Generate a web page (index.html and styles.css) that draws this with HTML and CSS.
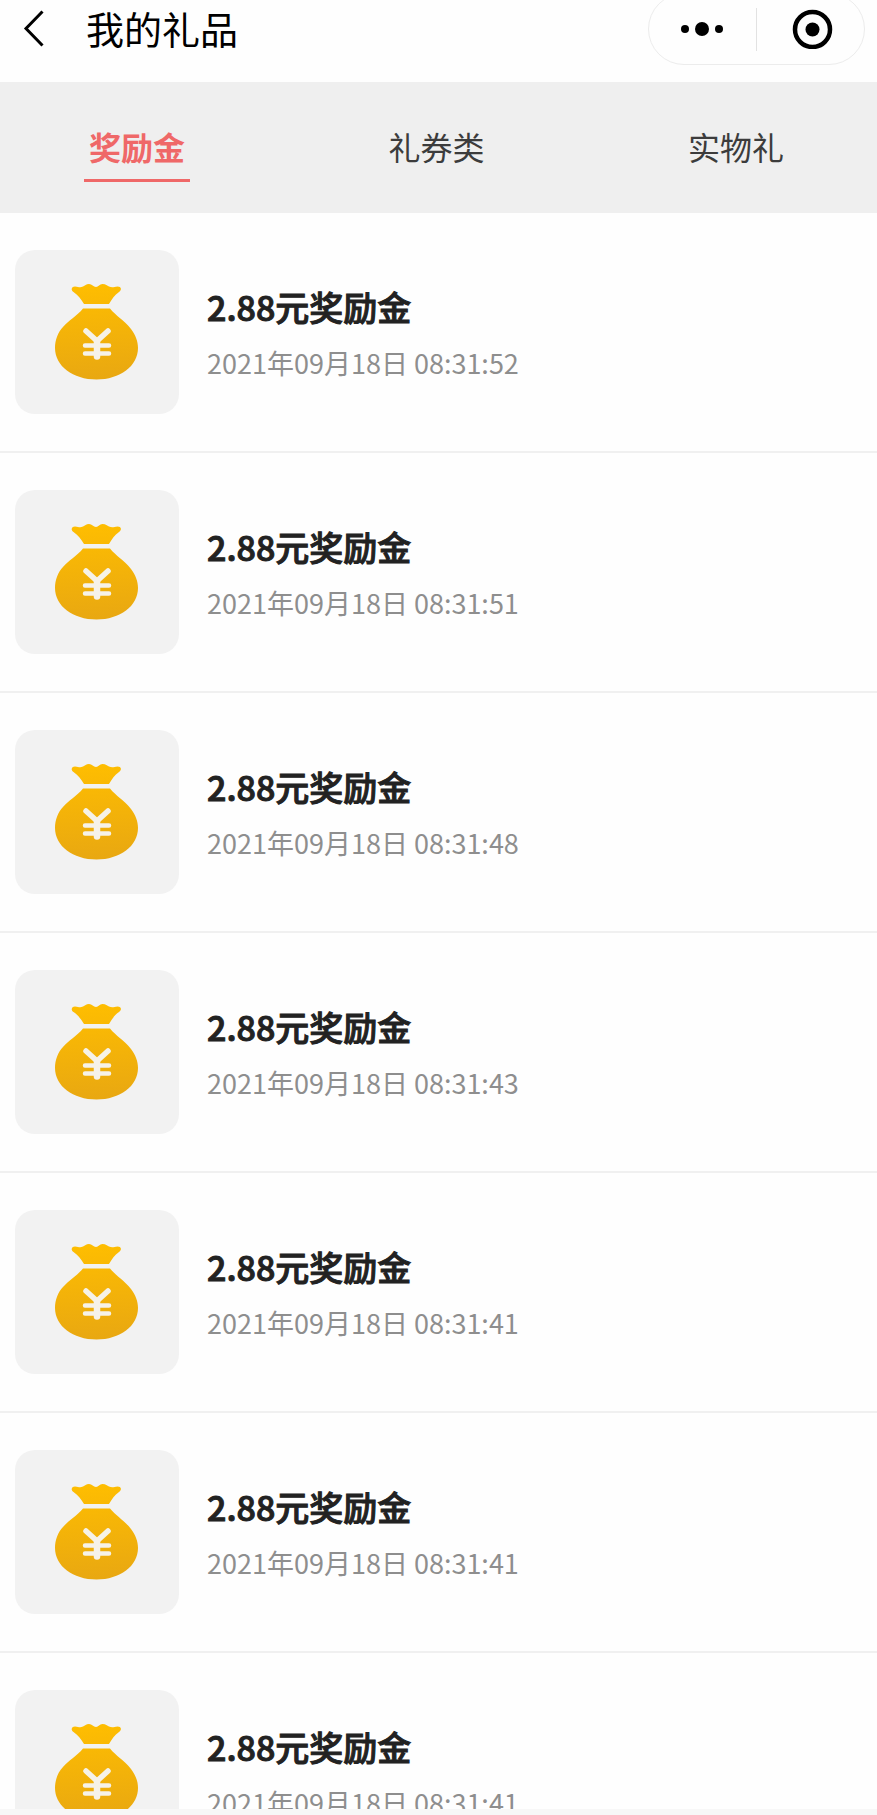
FILE: index.html
```html
<!DOCTYPE html>
<html lang="zh-CN">
<head>
<meta charset="utf-8">
<meta name="viewport" content="width=device-width, initial-scale=1">
<title>我的礼品</title>
<link rel="stylesheet" href="styles.css">
</head>
<body>
<svg class="defs" width="0" height="0" aria-hidden="true">
  <defs>
    <linearGradient id="gold" gradientUnits="userSpaceOnUse" x1="40" y1="34" x2="46" y2="130">
      <stop offset="0" stop-color="#ffbe00"/>
      <stop offset="1" stop-color="#e9a811"/>
    </linearGradient>
    <symbol id="bag" viewBox="0 0 164 164">
      <path fill="url(#gold)" d="M69 54 C66 49 63 45 58.500 42 C55.500 40 56.500 36.500 60 36.500 C64 37 65 38 68 36.500 C70 35.500 71 34 74 34 C77 34 78.500 37 81 37 C83.500 37 84.500 34 87.500 34 C91 34 92 35.500 94 36.500 C97 38 99 37 102.500 36.500 C106.500 36.500 107 40 104 42 C99.500 45 97 49 94 54 Z"/>
      <path fill="url(#gold)" d="M68 58.500 H95 C101 66 109 70 116 79 C120.500 85 123 91 123 98 C123 116 105 129.500 81.500 129.500 C58 129.500 40 116 40 98 C40 90 43 82 48 77 C54 70 62 66 68 58.500 Z"/>
      <path fill="none" stroke="#f6f2e8" stroke-linecap="round" stroke-width="4.500" d="M70 95.500 H94 M70 103.500 H94"/>
      <path fill="none" stroke="#f6f2e8" stroke-linecap="round" stroke-linejoin="round" stroke-width="5.500" d="M71 81 L82 91 L93 81"/>
      <path fill="none" stroke="#f6f2e8" stroke-linecap="round" stroke-width="6.500" d="M82 91 V106.500"/>
    </symbol>
  </defs>
</svg>
<div class="app">
  <header class="header">
    <div class="navbar">
      <button class="back" type="button" aria-label="返回">
        <svg width="24" height="40" viewBox="0 0 24 40"><path d="M21.500 2.500 L5 19.500 L21.500 36.500" fill="none" stroke="#000" stroke-width="3"/></svg>
      </button>
      <h1 class="title">我的礼品</h1>
      <div class="capsule">
        <button class="capsule-button" type="button" aria-label="更多">
          <svg width="44" height="16" viewBox="0 0 44 16"><circle cx="4" cy="8" r="4"/><circle cx="21" cy="8" r="7"/><circle cx="38" cy="8" r="4"/></svg>
        </button>
        <span class="divider"></span>
        <button class="capsule-button" type="button" aria-label="关闭">
          <svg width="44" height="40" viewBox="0 0 44 40"><circle cx="23.500" cy="20.500" r="17.500" fill="none" stroke="#000" stroke-width="4.500"/><circle cx="23.500" cy="20.500" r="7"/></svg>
        </button>
      </div>
    </div>
  </header>
  <nav class="tabs" aria-label="礼品分类">
    <button class="tab active" type="button">奖励金</button>
    <button class="tab" type="button">礼券类</button>
    <button class="tab" type="button">实物礼</button>
  </nav>
  <main class="content">
    <ul class="list">
      <li class="item"><span class="tile"><svg class="bag"><use href="#bag"/></svg></span><div class="info"><h2 class="name">2.88元奖励金</h2><time class="date">2021年09月18日 08:31:52</time></div></li>
      <li class="item"><span class="tile"><svg class="bag"><use href="#bag"/></svg></span><div class="info"><h2 class="name">2.88元奖励金</h2><time class="date">2021年09月18日 08:31:51</time></div></li>
      <li class="item"><span class="tile"><svg class="bag"><use href="#bag"/></svg></span><div class="info"><h2 class="name">2.88元奖励金</h2><time class="date">2021年09月18日 08:31:48</time></div></li>
      <li class="item"><span class="tile"><svg class="bag"><use href="#bag"/></svg></span><div class="info"><h2 class="name">2.88元奖励金</h2><time class="date">2021年09月18日 08:31:43</time></div></li>
      <li class="item"><span class="tile"><svg class="bag"><use href="#bag"/></svg></span><div class="info"><h2 class="name">2.88元奖励金</h2><time class="date">2021年09月18日 08:31:41</time></div></li>
      <li class="item"><span class="tile"><svg class="bag"><use href="#bag"/></svg></span><div class="info"><h2 class="name">2.88元奖励金</h2><time class="date">2021年09月18日 08:31:41</time></div></li>
      <li class="item"><span class="tile"><svg class="bag"><use href="#bag"/></svg></span><div class="info"><h2 class="name">2.88元奖励金</h2><time class="date">2021年09月18日 08:31:41</time></div></li>
    </ul>
  </main>
</div>
</body>
</html>
```
FILE: styles.css
```css
* {
  box-sizing: border-box;
}

body {
  margin: 0;
  background: #f7f7f7;
  font-family: "Noto Sans CJK SC", sans-serif;
}

button {
  padding: 0;
  border: 0;
  background: none;
  font: inherit;
  cursor: pointer;
}

svg {
  display: block;
}

.defs {
  position: absolute;
}

.app {
  display: flex;
  flex-direction: column;
  height: 100vh;
  padding-bottom: 6px;
  overflow: hidden;
}

.header {
  flex: none;
  padding: 0 12px 24px 21px;
  background: #fefefe;
  overflow: hidden;
}

.navbar {
  display: flex;
  align-items: center;
  height: 58px;
}

.title {
  margin: 0 auto 0 41px;
  padding-bottom: 2px;
  color: #000;
  font-size: 38px;
  font-weight: 400;
  line-height: 56px;
}

.capsule {
  display: flex;
  flex: none;
  align-items: center;
  width: 217px;
  height: 72px;
  border: 1px solid #ececec;
  border-radius: 36px;
}

.capsule-button {
  display: flex;
  flex: 1;
  align-items: center;
  justify-content: center;
  height: 100%;
}

.divider {
  width: 1px;
  height: 43px;
  background: #e2e2e2;
}

.tabs {
  display: flex;
  flex: none;
  align-items: flex-start;
  justify-content: space-between;
  height: 131px;
  padding: 40px 88px 0 84px;
  background: #efefef;
}

.tab {
  padding: 0 5px 9px;
  border-bottom: 3px solid transparent;
  color: #3c3c3c;
  font-size: 32px;
  line-height: 48px;
}

.active {
  border-color: #ef6868;
  color: #ef6868;
  font-weight: 700;
}

.content {
  flex: 1;
  min-height: 0;
  background: #fefefe;
  overflow: hidden;
}

.list {
  margin: 0;
  padding: 0;
  list-style: none;
}

.item {
  display: flex;
  align-items: center;
  gap: 28px;
  height: 240px;
  padding: 0 15px;
  border-bottom: 2px solid #f0f0f0;
}

.tile {
  flex: none;
  width: 164px;
  height: 164px;
  border-radius: 20px;
  background: #f2f2f2;
}

.bag {
  width: 100%;
  height: 100%;
}

.info {
  padding-top: 6px;
}

.name {
  margin: 0;
  color: #222;
  font-size: 34px;
  font-weight: 500;
  line-height: 56px;
  -webkit-text-stroke: 1px #222;
}

.date {
  display: block;
  color: #8e8e8e;
  font-size: 27px;
  line-height: 56px;
}
```
